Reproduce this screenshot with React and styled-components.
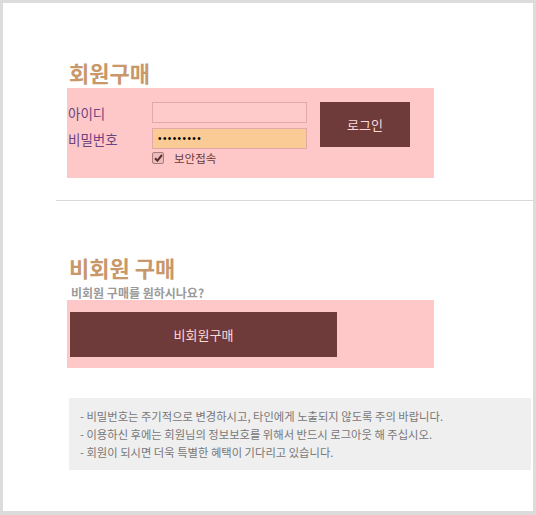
import styled, { createGlobalStyle } from 'styled-components';

const GlobalStyle = createGlobalStyle`
    body {
        margin: 0;
        background: #ffffff;
        font-family: "Noto Sans CJK KR", "Noto Sans", sans-serif;
    }
`

const notices = [
    '- 비밀번호는 주기적으로 변경하시고, 타인에게 노출되지 않도록 주의 바랍니다.',
    '- 이용하신 후에는 회원님의 정보보호를 위해서 반드시 로그아웃 해 주십시오.',
    '- 회원이 되시면 더욱 특별한 혜택이 기다리고 있습니다.',
];

const App = () => {
    return (
        <>
            <GlobalStyle />
            <Frame>
                <Section>
                    <Title>회원구매</Title>
                    <LoginBox>
                        <Fields>
                            <Label>아이디</Label>
                            <Input type="text" />
                            <Label>비밀번호</Label>
                            <Input type="password" defaultValue="123456789" $filled />
                            <span />
                            <SecureRow>
                                <CheckBox>
                                    <svg width="9" height="8" viewBox="0 0 9 8">
                                        <path d="M1 4.2 L3.4 6.6 L8 1" fill="none" stroke="#5b2a2a" strokeWidth="2" />
                                    </svg>
                                </CheckBox>
                                보안접속
                            </SecureRow>
                        </Fields>
                        <DarkButton $width="90px" $gap="13px">로그인</DarkButton>
                    </LoginBox>
                </Section>

                <Divider />

                <Section $top="53px">
                    <Title>비회원 구매</Title>
                    <SubTitle>비회원 구매를 원하시나요?</SubTitle>
                    <GuestBox>
                        <DarkButton $width="267px">비회원구매</DarkButton>
                    </GuestBox>
                    <NoticeBox>
                        {notices.map((text) => (
                            <p key={text}>{text}</p>
                        ))}
                    </NoticeBox>
                </Section>
            </Frame>
        </>
    )
}

const Frame = styled.div`
    width: 536px;
    height: 515px;
    box-sizing: border-box;
    border: 3px solid #dcdcdc;
    border-bottom-width: 4px;
    padding-top: 56px;
    background: #ffffff;
    overflow: hidden;
`

const Section = styled.div`
    padding-left: 64px;
    margin-top: ${(p) => p.$top || '0'};
`

const Title = styled.h2`
    margin: 0 0 3px 2px;
    font-size: 22px;
    line-height: 26px;
    font-weight: bold;
    color: #c8976a;
`

const LoginBox = styled.div`
    display: flex;
    align-items: flex-start;
    width: 367px;
    height: 90px;
    box-sizing: border-box;
    padding: 14px 0 0 1px;
    background: #ffc8c8;
`

const Fields = styled.div`
    display: grid;
    grid-template-columns: 84px 155px;
    grid-auto-rows: 21px;
    row-gap: 5px;
    align-items: center;
`

const Label = styled.span`
    font-size: 13.5px;
    color: #6b4480;
`

const Input = styled.input`
    width: 155px;
    height: 21px;
    box-sizing: border-box;
    margin: 0;
    padding: 0 5px;
    border: 1px solid #e3a9a9;
    background: ${(p) => (p.$filled ? '#fbcb96' : '#ffcaca')};
    font-size: 10px;
    letter-spacing: 1.4px;
    color: #000;
    outline: none;
`

const SecureRow = styled.label`
    display: flex;
    align-items: center;
    gap: 10px;
    margin-top: -2px;
    font-size: 11.5px;
    color: #6a3b3b;
    align-self: start;
    height: 12px;
`

const CheckBox = styled.span`
    display: flex;
    align-items: center;
    justify-content: center;
    width: 10px;
    height: 10px;
    border: 1px solid #a77b7b;
    border-radius: 2px;
    background: #eabcbc;
`

const DarkButton = styled.button`
    width: ${(p) => p.$width};
    height: 45px;
    margin-left: ${(p) => p.$gap || '0'};
    border: none;
    padding: 0;
    background: #6f3a3a;
    color: #fbd9d9;
    font-family: inherit;
    font-size: 13px;
    cursor: pointer;
`

const Divider = styled.hr`
    margin: 22px 0 0 53px;
    border: none;
    height: 1px;
    background: #d9d9d9;
`

const SubTitle = styled.p`
    margin: 6px 0 0 4px;
    font-size: 12px;
    line-height: 14px;
    font-weight: bold;
    color: #9a9a9a;
`

const GuestBox = styled.div`
    width: 367px;
    height: 68px;
    box-sizing: border-box;
    padding: 12px 3px;
    background: #ffc8c8;
`

const NoticeBox = styled.div`
    margin: 30px 2px 0 2px;
    padding: 9px 11px;
    background: #efefef;

    p {
        margin: 0;
        font-size: 11.3px;
        line-height: 18px;
        color: #777777;
    }
`

export default App;
